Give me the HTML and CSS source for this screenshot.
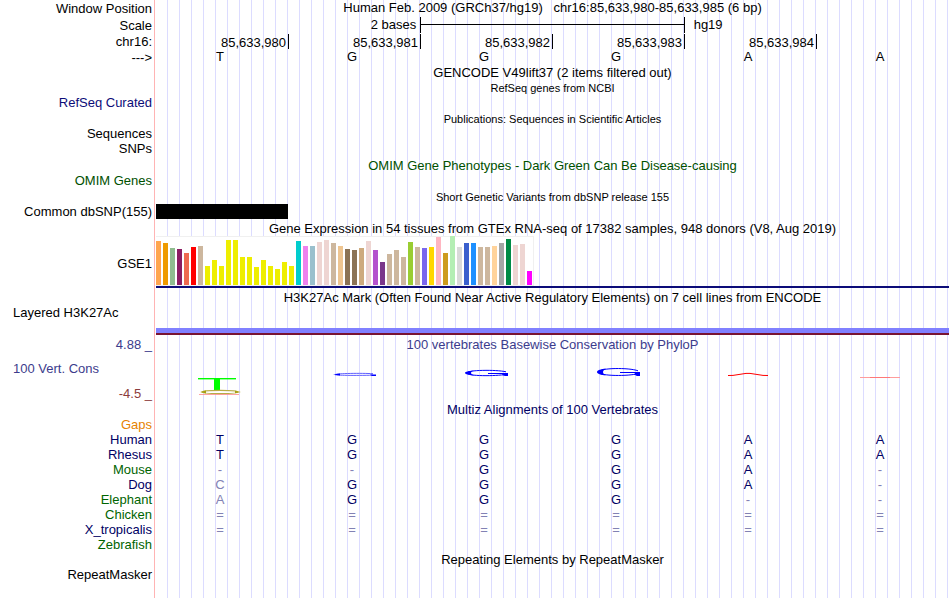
FILE: index.html
```html
<!DOCTYPE html>
<html lang="en">
<head>
    <meta charset="utf-8">
    <title>chr16:85,633,980-85,633,985</title>
    <meta name="viewport" content="width=device-width, initial-scale=1">
    <link rel="stylesheet" href="styles.css">
</head>
<body>

<main id="tracks">

    <!-- ruler -->
    <div class="row ruler">
        <div class="label">Window Position</div>
        <div class="title position">Human Feb. 2009 (GRCh37/hg19)   chr16:85,633,980-85,633,985 (6 bp)</div>
    </div>
    <div class="row ruler">
        <div class="label">Scale</div>
        <div class="scale">
            <span class="scale-size">2 bases</span>
            <span class="scale-line"></span>
            <span class="scale-db">hg19</span>
        </div>
    </div>
    <div class="row ticks-row">
        <div class="label">chr16:</div>
        <div class="bases ticks">
            <span>85,633,980</span><span>85,633,981</span><span>85,633,982</span><span>85,633,983</span><span>85,633,984</span>
        </div>
    </div>
    <div class="row">
        <div class="label">---&gt;</div>
        <div class="bases letters">
            <span>T</span><span>G</span><span>G</span><span>G</span><span>A</span><span>A</span>
        </div>
    </div>

    <!-- genes -->
    <div class="row tall"><div class="title">GENCODE V49lift37 (2 items filtered out)</div></div>
    <div class="row small"><div class="title">RefSeq genes from NCBI</div></div>
    <div class="row"><div class="label refseq">RefSeq Curated</div></div>

    <!-- publications -->
    <div class="row small spaced"><div class="title">Publications: Sequences in Scientific Articles</div></div>
    <div class="row"><div class="label">Sequences</div></div>
    <div class="row tall"><div class="label snps">SNPs</div></div>

    <!-- omim -->
    <div class="row spaced short omim"><div class="title">OMIM Gene Phenotypes - Dark Green Can Be Disease-causing</div></div>
    <div class="row omim"><div class="label">OMIM Genes</div></div>

    <!-- dbSNP -->
    <div class="row small spaced"><div class="title">Short Genetic Variants from dbSNP release 155</div></div>
    <div class="row">
        <div class="label">Common dbSNP(155)</div>
        <div class="snp"></div>
    </div>

    <!-- gtex -->
    <div class="row gtex-title"><div class="title">Gene Expression in 54 tissues from GTEx RNA-seq of 17382 samples, 948 donors (V8, Aug 2019)</div></div>
    <div class="row gtex-row">
        <div class="label">GSE1</div>
        <div class="gtex"><div id="gtex-bars"></div></div>
    </div>

    <!-- H3K27Ac -->
    <div class="row spaced short"><div class="title">H3K27Ac Mark (Often Found Near Active Regulatory Elements) on 7 cell lines from ENCODE</div></div>
    <div class="row"><div class="label left">Layered H3K27Ac</div></div>
    <div class="row"><div class="h3k27ac"></div></div>

    <!-- conservation -->
    <div class="row spaced cons">
        <div class="label">4.88 _</div>
        <div class="title">100 vertebrates Basewise Conservation by PhyloP</div>
    </div>
    <div class="row cons">
        <div class="cons-labels">
            <div class="label left">100 Vert. Cons</div>
            <div class="label negative">-4.5 _</div>
        </div>
        <div class="bases logo">
            <svg viewBox="0 0 132 49">
                <rect x="41" y="26" width="38" height="1.4" fill="#00ff00"/>
                <rect x="57" y="27" width="6" height="11" fill="#00ff00"/>
                <ellipse cx="63" cy="40" rx="18" ry="1.6" fill="#ffffff" stroke="#b8ac48" stroke-width="1.1"/>
                <path d="M43 40 L49 38.4 L49 41.6 Z M78 38.8 L84 40 L78 41.2 Z" fill="#a8a010"/>
                <path d="M42 42.5 H82" stroke="#ff8c8c" stroke-width="0.8"/>
            </svg>
            <svg viewBox="0 0 132 49">
                <path d="M84 21.7 C72 21 48 21.4 46 22.6 C46 23.4 66 23.6 84 23.2" fill="none" stroke="#6060ff" stroke-width="1"/>
                <path d="M44 22.6 L51 21.6 L51 23.4 Z M81 22.4 H87 V24 H83 Z" fill="#0000ff"/>
            </svg>
            <svg viewBox="0 0 132 49">
                <path d="M85 19.8 C75 17.5 46 17.9 46 21 C46 24.3 75 24.3 85 22.3" fill="none" stroke="#0000ff" stroke-width="1"/>
                <path d="M44 21 C44 19.8 48 19 53 18.6 C49 20 49 22 53 23.4 C48 23 44 22.2 44 21 Z M83 21 H87 V24 H84 L81 23 Z" fill="#0000ff"/>
                <path d="M67 21.5 H86" stroke="#0000ff" stroke-width="1"/>
            </svg>
            <svg viewBox="0 0 132 49">
                <path d="M85 18.8 C76 15.4 46 15.8 46 20 C46 24.3 76 24.3 85 21.6" fill="none" stroke="#0000ff" stroke-width="1"/>
                <path d="M44 20 C44 18.2 48 17 53 16.4 C49 18.4 49 21.6 53 23.6 C48 23 44 21.8 44 20 Z M83 20 H87 V24 H84 L81 22.4 Z" fill="#0000ff"/>
                <path d="M67 20.5 H86" stroke="#0000ff" stroke-width="1"/>
            </svg>
            <svg viewBox="0 0 132 49">
                <path d="M43 23.5 L48 23.4 L61 21.4 H65 L78 23.4 L83 23.5" fill="none" stroke="#ff0000" stroke-width="1"/>
            </svg>
            <svg viewBox="0 0 132 49">
                <path d="M43 25.5 H83" stroke="#ff9c9c" stroke-width="1"/>
                <path d="M53 25.5 H73" stroke="#ff7878" stroke-width="1"/>
            </svg>
        </div>
    </div>

    <!-- multiz -->
    <div class="row spaced short multiz-title"><div class="title">Multiz Alignments of 100 Vertebrates</div></div>
    <table class="multiz">
        <tbody>
            <tr class="gaps"><th scope="row">Gaps</th><td></td><td></td><td></td><td></td><td></td><td></td></tr>
            <tr><th scope="row">Human</th><td>T</td><td>G</td><td>G</td><td>G</td><td>A</td><td>A</td></tr>
            <tr><th scope="row">Rhesus</th><td>T</td><td>G</td><td>G</td><td>G</td><td>A</td><td>A</td></tr>
            <tr class="green"><th scope="row">Mouse</th><td class="diff">-</td><td class="diff">-</td><td>G</td><td>G</td><td>A</td><td class="diff">-</td></tr>
            <tr><th scope="row">Dog</th><td class="diff">C</td><td>G</td><td>G</td><td>G</td><td>A</td><td class="diff">-</td></tr>
            <tr class="green"><th scope="row">Elephant</th><td class="diff">A</td><td>G</td><td>G</td><td>G</td><td class="diff">-</td><td class="diff">-</td></tr>
            <tr class="green"><th scope="row">Chicken</th><td class="diff">=</td><td class="diff">=</td><td class="diff">=</td><td class="diff">=</td><td class="diff">=</td><td class="diff">=</td></tr>
            <tr><th scope="row">X_tropicalis</th><td class="diff">=</td><td class="diff">=</td><td class="diff">=</td><td class="diff">=</td><td class="diff">=</td><td class="diff">=</td></tr>
            <tr class="green"><th scope="row">Zebrafish</th><td></td><td></td><td></td><td></td><td></td><td></td></tr>
        </tbody>
    </table>

    <!-- repeats -->
    <div class="row"><div class="title">Repeating Elements by RepeatMasker</div></div>
    <div class="row"><div class="label">RepeatMasker</div></div>

</main>

<script src="gtex.js"></script>
</body>
</html>
```
FILE: styles.css
```css
* {
    box-sizing: border-box;
}

body {
    font: normal 13px/15px "Liberation Sans", Arial, Helvetica, sans-serif;
    color: #000;
    background: #fff;
    margin: 0;
}

/* pink divider, then a guide line every 12px */
#tracks {
    min-height: 100vh;
    padding-right: 1px;
    background:
        linear-gradient(#ffb4b4, #ffb4b4) 154px 0 / 1px 100% no-repeat,
        repeating-linear-gradient(to right, transparent 0 11px, #dcdcff 11px 12px) 156px 0 / 100% 100% no-repeat;
}

.row {
    display: grid;
    grid-template-columns: 152px minmax(0, 1fr);
    column-gap: 4px;
    min-height: 15px;
}

    .row > * {
        grid-row: 1;
    }

    .row > :not(.label):not(.cons-labels) {
        grid-column: 2;
    }

.ruler {
    min-height: 17px;
}

.tall {
    min-height: 16px;
}

.short {
    line-height: 14px;
    min-height: 14px;
}

.spaced {
    margin-top: 2px;
}

.small {
    font-size: 11px;
    line-height: 14px;
    min-height: 14px;
}

.label {
    text-align: right;
    white-space: nowrap;
}

    .label.left {
        text-align: left;
        padding-left: 13px;
    }

.ruler .label {
    line-height: 17px;
}

.snps {
    line-height: 16px;
}

.title {
    text-align: center;
    white-space: nowrap;
}

.position {
    white-space: pre;
}

.refseq {
    color: #0c0c78;
}

.omim {
    color: #005000;
}

/* scale bar */
.scale {
    display: grid;
    grid-template-columns: repeat(3, 1fr);
    line-height: 16px;
}

.scale-size {
    text-align: right;
    padding-right: 4px;
}

.scale-line {
    height: 16px;
    border: solid #000;
    border-width: 0 1px;
    background: linear-gradient(#000, #000) 0 7px / 100% 1px no-repeat;
}

.scale-db {
    padding-left: 9px;
}

/* six columns, one for each base */
.bases {
    display: grid;
    grid-template-columns: repeat(6, 1fr);
    padding-left: 1px;
}

.ticks-row {
    min-height: 16px;
    line-height: 16px;
}

.ticks span {
    height: 15px;
    border-right: 1px solid #000;
    padding-right: 2px;
    text-align: right;
    line-height: 17px;
}

.letters span {
    text-align: center;
    padding-right: 6px;
    line-height: 14px;
}

.snp {
    width: 132px;
    height: 15px;
    background: #000;
}

/* gtex */
.gtex-title {
    min-height: 17px;
    padding-top: 2px;
}

.gtex-row .label {
    padding-top: 20px;
}

.gtex {
    border-bottom: 2px solid #0c0c78;
    margin-bottom: 1px;
}

#gtex-bars {
    display: flex;
    align-items: flex-end;
    gap: 2px;
    width: 378px;
    height: 50px;
    background: #fff;
    border: solid #f0f0f0;
    border-width: 1px 1px 1px 0;
}

    #gtex-bars span {
        flex: 0 0 5px;
    }

.h3k27ac {
    height: 7px;
    margin-top: 8px;
    background: #8080ff;
    border-bottom: 2px solid #781432;
}

/* conservation */
.cons {
    color: #3c3c8c;
}

.cons-labels {
    display: flex;
    flex-direction: column;
    justify-content: space-between;
    padding-top: 9px;
}

.negative {
    color: #8c3c3c;
}

.logo svg {
    display: block;
    width: 132px;
    height: 49px;
}

/* multiz */
.multiz-title {
    color: #000064;
}

.multiz {
    width: 100%;
    table-layout: fixed;
    border-collapse: collapse;
    color: #000064;
}

    .multiz th,
    .multiz td {
        height: 15px;
        padding: 0;
        font-weight: normal;
    }

    .multiz th {
        width: 157px;
        padding-right: 5px;
        text-align: right;
    }

    .multiz td {
        padding-right: 6px;
        text-align: center;
    }

    .multiz .gaps th {
        color: #e68200;
    }

    .multiz .green th {
        color: #006400;
    }

    .multiz .diff {
        color: #8282b4;
    }
```
FILE: gtex.js
```js
// [ color, height ] for each tissue
const tissues = [
    ['#ffa54f', 44], ['#ee9a00', 42], ['#8fbc8f', 37], ['#8b1c62', 36], ['#ee6a50', 32], ['#ff0000', 38],
    ['#cdb79e', 39], ['#eeee00', 19], ['#eeee00', 25], ['#eeee00', 19], ['#eeee00', 45], ['#eeee00', 45],
    ['#eeee00', 28], ['#eeee00', 28], ['#eeee00', 18], ['#eeee00', 25], ['#eeee00', 19], ['#eeee00', 16],
    ['#eeee00', 23], ['#eeee00', 19], ['#00cdcd', 44], ['#ee82ee', 39], ['#9ac0cd', 39], ['#eed5d2', 43],
    ['#eed5d2', 45], ['#cdb79e', 42], ['#eec591', 39], ['#8b7355', 36], ['#8b7355', 35], ['#cdaa7d', 37],
    ['#eed5d2', 44], ['#b452cd', 35], ['#7a378b', 23], ['#cdb79e', 31], ['#cdb79e', 35], ['#cdb79e', 28],
    ['#9acd32', 43], ['#cdb79e', 38], ['#7a67ee', 37], ['#ffd700', 38], ['#ffb6c1', 48], ['#cd9b1d', 32],
    ['#b4eeb4', 49], ['#d9d9d9', 38], ['#3a5fcd', 42], ['#1e90ff', 42], ['#cdb79e', 38], ['#cdb79e', 38],
    ['#ffd39b', 39], ['#a6a6a6', 42], ['#008b45', 46], ['#eed5d2', 40], ['#eed5d2', 41], ['#ff00ff', 14]
];

const bars = document.getElementById('gtex-bars');

tissues.forEach( function( tissue )
{
    const bar = document.createElement('span');
    bar.style.background    = tissue[0];
    bar.style.height        = tissue[1] + 'px';
    bars.appendChild( bar );
});
```
